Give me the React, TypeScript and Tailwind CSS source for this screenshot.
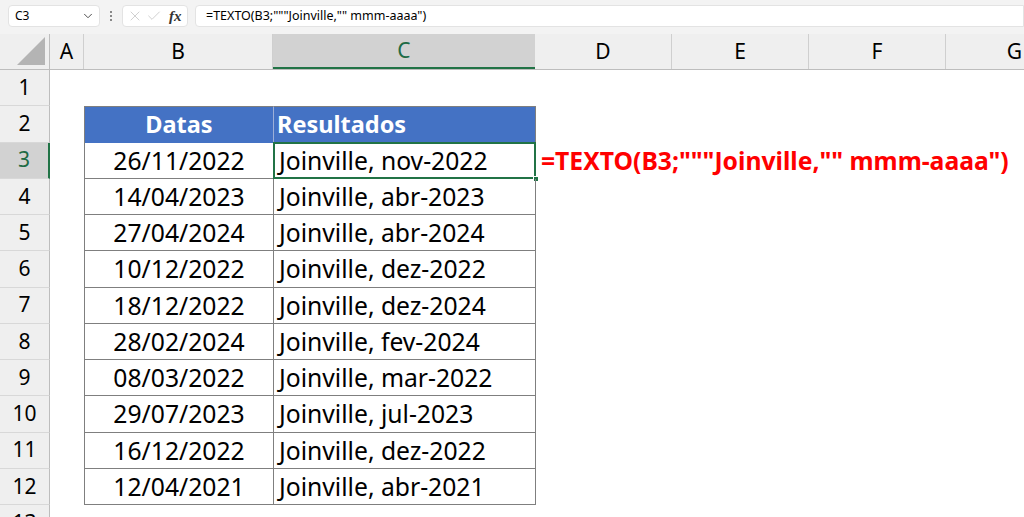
import { ChevronDown, X, Check } from 'lucide-react'

const rows = [
  ['26/11/2022', 'Joinville, nov-2022'],
  ['14/04/2023', 'Joinville, abr-2023'],
  ['27/04/2024', 'Joinville, abr-2024'],
  ['10/12/2022', 'Joinville, dez-2022'],
  ['18/12/2022', 'Joinville, dez-2024'],
  ['28/02/2024', 'Joinville, fev-2024'],
  ['08/03/2022', 'Joinville, mar-2022'],
  ['29/07/2023', 'Joinville, jul-2023'],
  ['16/12/2022', 'Joinville, dez-2022'],
  ['12/04/2021', 'Joinville, abr-2021'],
]

const font = { fontFamily: '"Noto Sans", "Open Sans", sans-serif' }

function RowHead({ n, active }: { n: number; active?: boolean }) {
  return (
    <div
      className={
        'w-[50px] shrink-0 flex items-center justify-center text-[21px] border-b border-[#d8d8d8] ' +
        (active
          ? 'bg-[#d2d2d2] text-[#1e6b45] border-r-2 border-r-[#217346]'
          : 'bg-[#efefef] text-black border-r border-r-[#bdbdbd]')
      }
    >
      {n}
    </div>
  )
}

export default function App() {
  return (
    <div className="w-[1024px] h-[517px] overflow-hidden bg-white" style={font}>
      {/* formula bar */}
      <div className="h-[34px] bg-[#f3f3f3] flex items-start pt-[5px]">
        <div className="ml-[8px] w-[92px] h-[22px] bg-white rounded-[4px] border border-[#e3e3e3] flex items-center justify-between pl-[6px] pr-[4px]">
          <span className="text-[12px] text-black">C3</span>
          <ChevronDown size={14} strokeWidth={1.6} className="text-[#444]" />
        </div>
        <div className="w-[22px] h-[22px] flex flex-col items-center justify-center gap-[2px]">
          <span className="w-[2px] h-[2px] bg-[#888]" />
          <span className="w-[2px] h-[2px] bg-[#888]" />
          <span className="w-[2px] h-[2px] bg-[#888]" />
        </div>
        <div className="w-[66px] h-[22px] bg-white rounded-[4px] border border-[#e3e3e3] flex items-center pl-[4px] gap-[3px]">
          <X size={16} strokeWidth={1} className="text-[#b8b8b8]" />
          <Check size={16} strokeWidth={1} className="text-[#b8b8b8]" />
          <span
            className="ml-[4px] text-[15px] italic font-bold text-[#333]"
            style={{ fontFamily: '"Liberation Serif", serif' }}
          >
            fx
          </span>
        </div>
        <div className="ml-[7px] flex-1 h-[22px] bg-white border border-[#e3e3e3] rounded-l-[4px] flex items-center pl-[10px]">
          <span className="text-[12.5px] text-black">=TEXTO(B3;"""Joinville,"" mmm-aaaa")</span>
        </div>
      </div>

      {/* column headers */}
      <div className="h-[36px] flex bg-[#efefef] border-b border-[#bdbdbd] text-[21px] overflow-hidden">
        <div className="w-[50px] shrink-0 relative border-r border-[#bdbdbd]">
          <div
            className="absolute right-[4px] bottom-[4px] w-[28px] h-[28px] bg-[#b4b4b4]"
            style={{ clipPath: 'polygon(100% 0, 100% 100%, 0 100%)' }}
          />
        </div>
        <div className="w-[34px] shrink-0 flex items-center justify-center border-r border-[#cfcfcf]">A</div>
        <div className="w-[189px] shrink-0 flex items-center justify-center border-r border-[#cfcfcf]">B</div>
        <div className="w-[262px] shrink-0 flex items-center justify-center bg-[#d2d2d2] text-[#1e6b45] border-b-2 border-[#217346]">
          C
        </div>
        <div className="w-[137px] shrink-0 flex items-center justify-center border-r border-[#cfcfcf]">D</div>
        <div className="w-[137px] shrink-0 flex items-center justify-center border-r border-[#cfcfcf]">E</div>
        <div className="w-[137px] shrink-0 flex items-center justify-center border-r border-[#cfcfcf]">F</div>
        <div className="w-[137px] shrink-0 flex items-center justify-center">G</div>
      </div>

      {/* row 1 */}
      <div className="h-[36.25px] flex">
        <RowHead n={1} />
      </div>

      {/* row 2: table header */}
      <div className="h-[36.25px] flex">
        <RowHead n={2} />
        <div className="w-[34px] shrink-0" />
        <div className="w-[189px] shrink-0 bg-[#4472c4] border-l border-t border-[#7f7f7f] flex items-center justify-center text-white font-bold text-[23.5px]">
          Datas
        </div>
        <div className="w-[263px] shrink-0 bg-[#4472c4] border-l border-l-[#9db0d8] border-t border-r border-[#7f7f7f] flex items-center pl-[3px] text-white font-bold text-[23.5px]">
          Resultados
        </div>
      </div>

      {rows.map(([d, r], i) => (
        <div key={i} className="h-[36.25px] flex">
          <RowHead n={i + 3} active={i === 0} />
          <div className="w-[34px] shrink-0" />
          <div className="w-[189px] shrink-0 border-l border-b border-[#7f7f7f] flex items-center justify-center text-[24.7px] text-black">
            {d}
          </div>
          <div className="w-[263px] shrink-0 relative border-l border-r border-b border-[#7f7f7f] flex items-center pl-[5px] text-[24.7px] text-black">
            {r}
            {i === 0 && (
              <>
                <div className="absolute -left-[1px] -top-[1px] -right-[1px] -bottom-[1px] border-2 border-[#217346]" />
                <div className="absolute -right-[4px] -bottom-[4px] w-[6px] h-[6px] bg-[#217346] border border-white" />
              </>
            )}
          </div>
          {i === 0 && (
            <div className="pl-[5px] flex items-center text-[24.7px] font-bold text-[#ff0000] whitespace-nowrap">
              =TEXTO(B3;"""Joinville,"" mmm-aaaa")
            </div>
          )}
        </div>
      ))}

      <div className="h-[36.25px] flex">
        <RowHead n={13} />
      </div>
    </div>
  )
}
